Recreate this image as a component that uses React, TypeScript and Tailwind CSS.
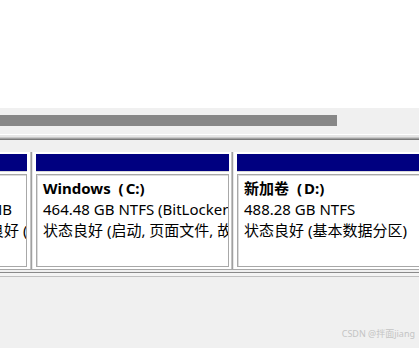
import React from "react";

const font = "font-['Noto_Sans','Noto_Sans_CJK_SC',sans-serif]";

function Divider() {
  return (
    <div className="flex h-full w-[3px] shrink-0">
      <div className="w-px bg-[#c4c4c4]" />
      <div className="w-px bg-[#a0a0a0]" />
      <div className="w-px bg-[#e8e8e8]" />
    </div>
  );
}

function Title({ name, letter }: { name: string; letter: string }) {
  return (
    <div className="font-bold">
      {name}
      <span className="inline-block w-[15px] pr-[2px] text-right">(</span>
      {letter})
    </div>
  );
}

function Column({
  className,
  boxClass,
  textClass,
  title,
  lines,
}: {
  className: string;
  boxClass: string;
  textClass: string;
  title: React.ReactNode;
  lines: string[];
}) {
  return (
    <div className={`flex flex-col bg-white ${className}`}>
      <div className="h-[2px] bg-white" />
      <div className="h-[17px] bg-[#000080]" />
      <div className="h-px bg-[#d8d8d8]" />
      <div className="flex flex-1 flex-col bg-white pt-[2px] pb-[2px]">
        <div
          className={`flex-1 overflow-hidden border border-[#a8a8a8] bg-white shadow-[inset_1px_1px_0_#dcdcdc] ${boxClass}`}
        >
          <div className={`whitespace-nowrap pt-[3px] text-[15px] leading-[21px] text-black ${textClass}`}>
            {title}
            {lines.map((l, i) => (
              <div key={i}>{l}</div>
            ))}
          </div>
        </div>
      </div>
    </div>
  );
}

export default function App() {
  return (
    <div className={`flex h-[348px] w-[419px] flex-col overflow-hidden bg-[#f0f0f0] ${font}`}>
      <div className="h-[108px] shrink-0 bg-white" />
      <div className="flex shrink-0 flex-col bg-[#f0f0f0]">
        <div className="h-[7px]" />
        <div className="h-[11px] w-[337px] bg-[#878787]" />
        <div className="h-[8px]" />
        <div className="h-px bg-white" />
        <div className="h-[2px] bg-[#e6e6e6]" />
        <div className="h-px bg-[#c8c8c8]" />
        <div className="h-px bg-[#a0a0a0]" />
        <div className="h-px bg-[#7a7a7a]" />
        <div className="h-[12px]" />
      </div>
      <div className="flex h-[117px] shrink-0">
        <Column
          className="w-[30px] shrink-0 pr-[3px]"
          boxClass="-ml-[2px]"
          textClass="-ml-[40px]"
          title={<div className="font-bold">EFI</div>}
          lines={["100 MB", "状态良好 (EFI 系统分区)"]}
        />
        <Divider />
        <Column
          className="w-[198px] shrink-0 pl-[3px] pr-[2px]"
          boxClass=""
          textClass="pl-[6px]"
          title={<Title name="Windows" letter="C:" />}
          lines={["464.48 GB NTFS (BitLocker 已加密)", "状态良好 (启动, 页面文件, 故障转储, 基本数据分区)"]}
        />
        <Divider />
        <Column
          className="flex-1 pl-[3px]"
          boxClass="-mr-[4px]"
          textClass="pl-[6px]"
          title={<Title name="新加卷" letter="D:" />}
          lines={["488.28 GB NTFS", "状态良好 (基本数据分区)"]}
        />
      </div>
      <div className="flex shrink-0 flex-col">
        <div className="h-px bg-[#a8a8a8]" />
        <div className="h-[2px] bg-[#f0f0f0]" />
        <div className="h-px bg-[#8a8a8a]" />
        <div className="h-[3px] bg-[#f4f4f4]" />
        <div className="h-px bg-[#c0c0c0]" />
      </div>
      <div className="flex flex-1 items-end justify-end pb-[8px] pr-[4px]">
        <span className="text-[9px] leading-[12px] text-[#c4c4c4]">CSDN @拌面jiang</span>
      </div>
    </div>
  );
}
